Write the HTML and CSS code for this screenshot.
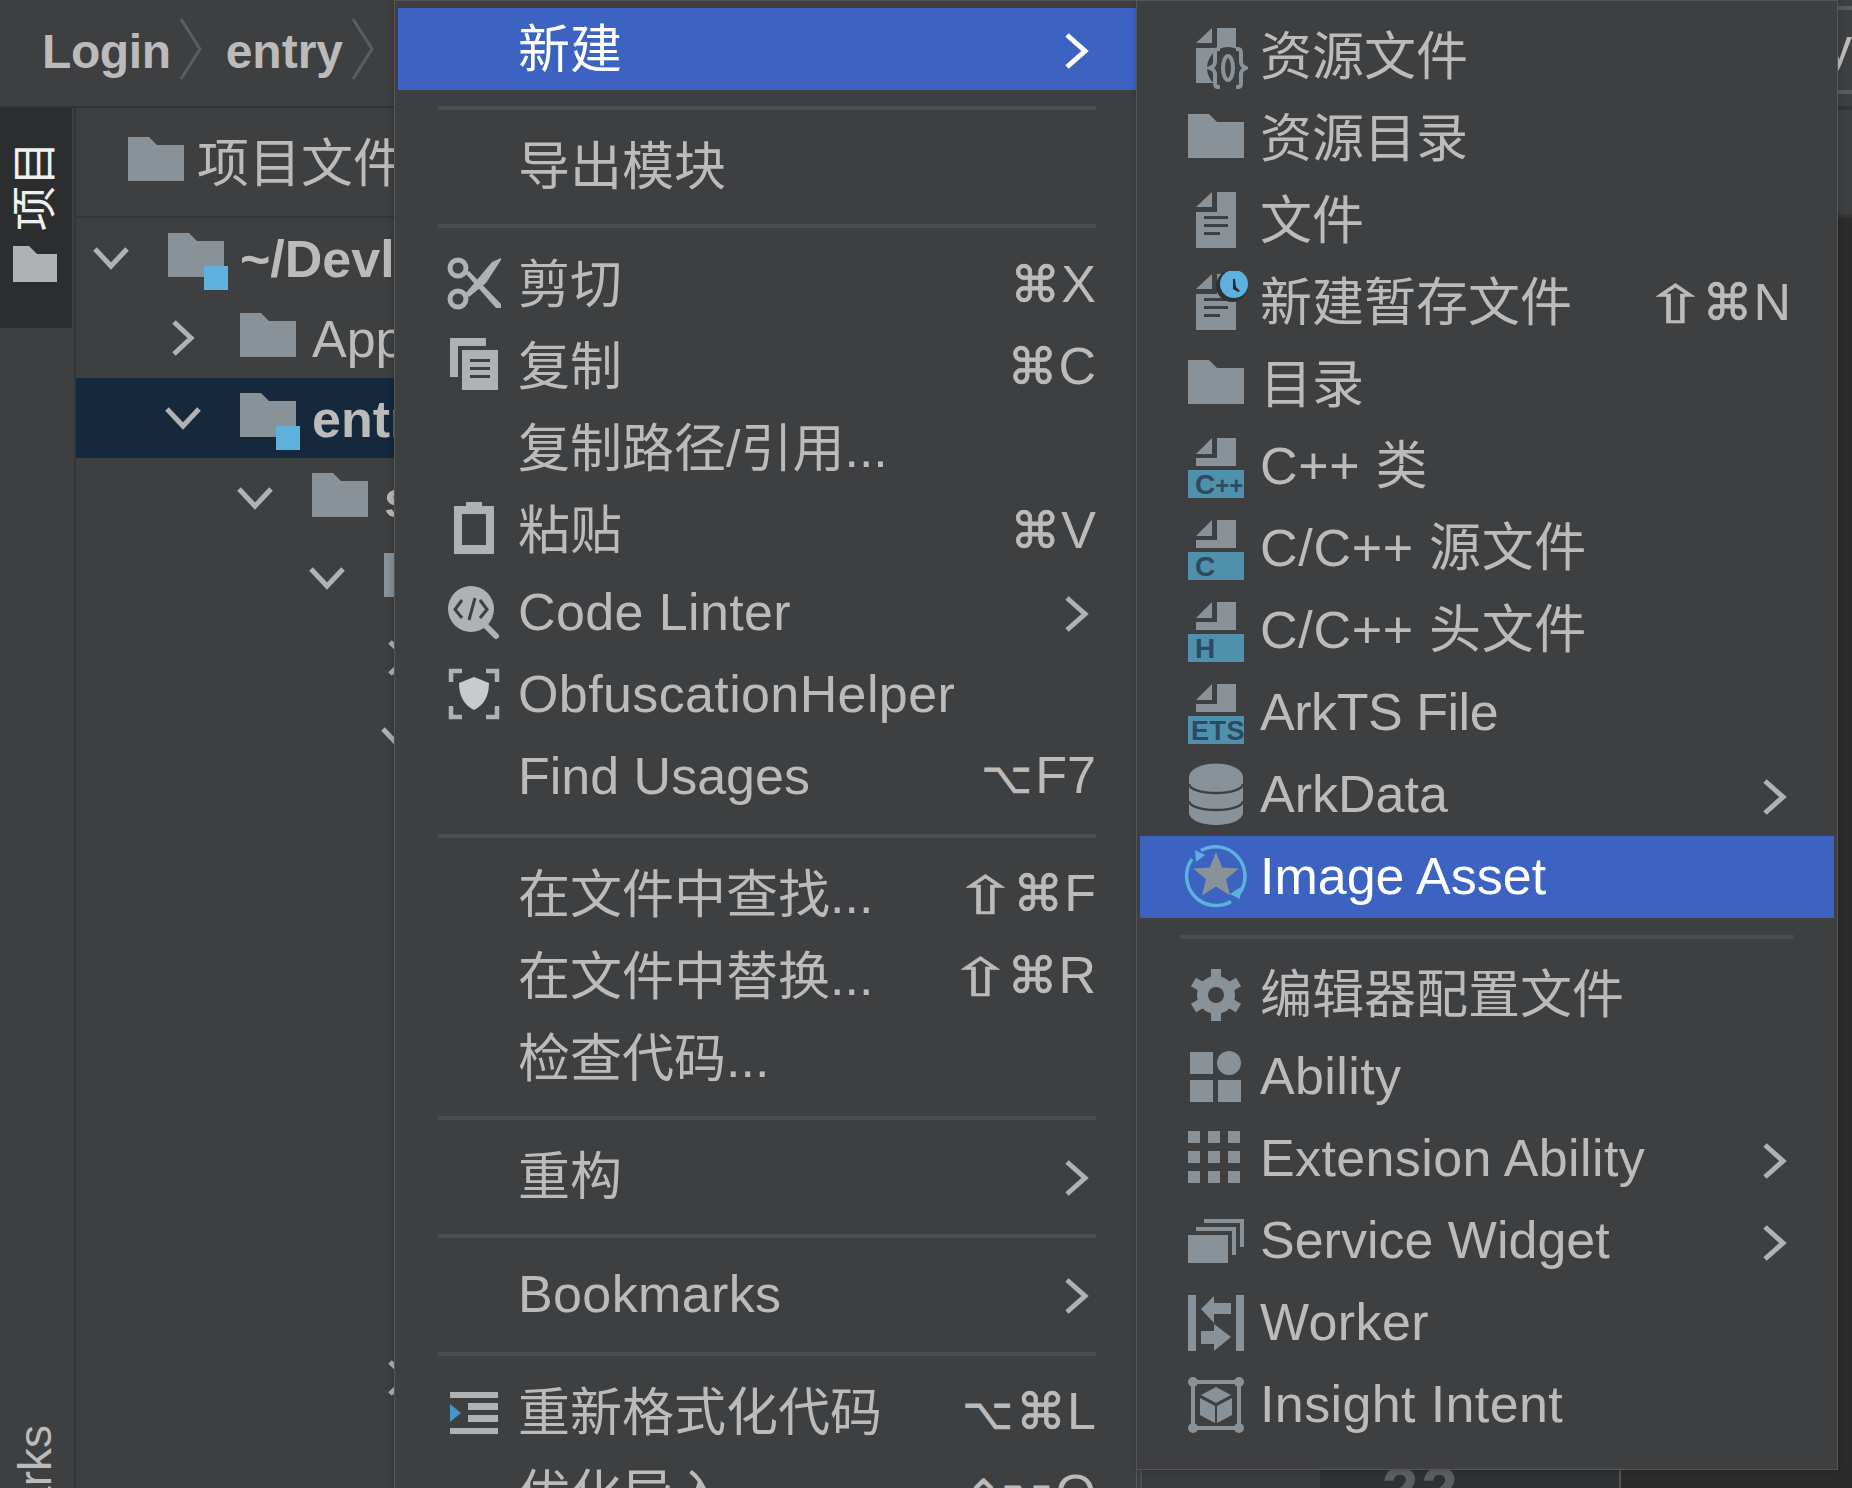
FILE: index.html
```html
<!DOCTYPE html>
<html lang="zh">
<head>
<meta charset="utf-8">
<title>Context menu</title>
<link rel="stylesheet" href="styles.css">
</head>
<body>
<svg class="defs" aria-hidden="true">
  <symbol id="folder" viewBox="0 0 64 64"><path class="f" d="M4 7H25L33 15H60V51H4Z"/></symbol>
  <symbol id="module" viewBox="0 0 64 64"><path class="f" d="M4 7H25L33 15H60V51H4Z"/><rect class="b" x="40" y="40" width="24" height="24"/></symbol>
  <symbol id="down" viewBox="0 0 36 36"><path class="cv" d="M2 9L18 26L34 9"/></symbol>
  <symbol id="right" viewBox="0 0 36 36"><path class="cv" d="M9 2L26 18L9 34"/></symbol>
  <symbol id="arrow" viewBox="0 0 30 40"><path class="cv" d="M4 4L22 20L4 36"/></symbol>
  <symbol id="arrow-w" viewBox="0 0 30 40"><path class="cv-w" d="M4 4L22 20L4 36"/></symbol>
  <symbol id="crumb" viewBox="0 0 24 64"><path class="cr" d="M2 2L21 32L2 62"/></symbol>

  <symbol id="scissors" viewBox="0 0 64 64">
    <circle class="s-g5" cx="16" cy="16" r="8"/><circle class="s-g5" cx="16" cy="47" r="8"/>
    <path class="g" d="M23 21L27 19L59 52V56H54Z"/><path class="g" d="M23 42L27 45L44 31L59 8V6L50 10Z"/>
  </symbol>
  <symbol id="copy" viewBox="0 0 64 64">
    <path class="g" d="M8 4H44V12H16V43H8Z"/>
    <path class="g" d="M20 16H56V56H20Z"/>
    <path class="d" d="M28 25H48V28H28ZM28 33H48V36H28ZM28 41H48V44H28Z"/>
  </symbol>
  <symbol id="paste" viewBox="0 0 64 64">
    <path class="g" fill-rule="evenodd" d="M12 8H24V4H40V8H52V56H12ZM20 16V47H44V16Z"/>
  </symbol>
  <symbol id="linter" viewBox="0 0 64 64">
    <circle class="g" cx="29" cy="29" r="23"/>
    <path class="s-g6" d="M43 45L54 56"/>
    <path class="s-d" d="M20 20L13 29.5L20 38M38 20L45 29.5L38 38M33 18L27 40"/>
  </symbol>
  <symbol id="shield" viewBox="0 0 64 64">
    <path class="s-g4" d="M20 9H9V20M44 9H55V20M9 44V55H20M55 44V55H44"/>
    <path class="l" d="M32 15L47 21C47 34 42 43 32 48C22 43 17 34 17 21Z"/>
  </symbol>
  <symbol id="format" viewBox="0 0 64 64">
    <path class="g" d="M8 12H56V18H8ZM26 23H56V30H26ZM26 35H56V42H26ZM8 48H56V54H8Z"/>
    <path class="bl" d="M8 24L19 33L8 42Z"/>
  </symbol>

  <symbol id="res" viewBox="0 0 64 64">
    <path class="f" d="M12 18L28 3V18ZM33 3H52V58H12V23H33Z"/>
    <circle class="d" cx="44" cy="43" r="21"/>
    <path class="s-f" d="M36 24H34Q31 24 31 28V37Q31 41 26 43Q31 45 31 49V58Q31 62 34 62H36M52 24H54Q57 24 57 28V37Q57 41 62 43Q57 45 57 49V58Q57 62 54 62H52"/>
    <ellipse class="s-f" cx="44" cy="43" rx="5" ry="12"/>
  </symbol>
  <symbol id="doc" viewBox="0 0 64 64">
    <path class="f" d="M12 18L28 3V18ZM33 3H52V59H12V23H33Z"/>
    <path class="d" d="M20 27H44V30H20ZM20 35H44V38H20ZM20 43H36V46H20Z"/>
  </symbol>
  <symbol id="scratch" viewBox="0 0 64 64">
    <path class="f" d="M12 18L28 3V18ZM33 3H52V59H12V23H33Z"/>
    <path class="d" d="M20 27H44V30H20ZM20 35H44V38H20ZM20 43H36V46H20Z"/>
    <circle class="sh" cx="48" cy="15" r="16"/>
    <circle class="b" cx="50" cy="13" r="14"/>
    <path class="ink" d="M49 8H51L52 16L56 20L54 21L49 18Z"/>
  </symbol>
  <symbol id="sheet" viewBox="0 0 64 64">
    <path class="f" d="M12 19L28 3V19ZM33 3H52V31H12V23H33Z"/>
    <rect class="t" x="4" y="35" width="56" height="28"/>
  </symbol>
  <symbol id="db" viewBox="0 0 64 64">
    <path class="f" d="M5 14A27 13.5 0 0 1 59 14V50A27 12 0 0 1 5 50Z"/>
    <path class="s-db" d="M5 21A27 9 0 0 0 59 21M5 38A27 9 0 0 0 59 38"/>
  </symbol>
  <symbol id="asset" viewBox="0 0 64 64">
    <path class="s-b" d="M17 5.5A29.5 29.5 0 0 1 55 49M47 56.5A29.5 29.5 0 0 1 8 14"/>
    <path class="b" d="M11 5L21 10L12 17ZM46 49L57 42L56 54Z"/>
    <path class="f" d="M32 7L38.2 22.5L54.8 23.6L42 34.2L46.1 50.4L32 41.5L17.9 50.4L22 34.2L9.2 23.6L25.8 22.5Z"/>
  </symbol>
  <symbol id="gear" viewBox="0 0 64 64">
    <circle class="f" cx="32" cy="32" r="19"/>
    <path class="f" d="M27 6H37V18H27ZM27 46H37V58H27Z"/>
    <path class="f rot60" d="M27 6H37V18H27ZM27 46H37V58H27Z"/>
    <path class="f rot120" d="M27 6H37V18H27ZM27 46H37V58H27Z"/>
    <circle class="d" cx="32" cy="32" r="8"/>
  </symbol>
  <symbol id="ability" viewBox="0 0 64 64">
    <rect class="f" x="6" y="7" width="23" height="22"/>
    <circle class="f" cx="45" cy="18" r="12"/>
    <rect class="f" x="6" y="35" width="23" height="22"/>
    <rect class="f" x="34" y="35" width="23" height="22"/>
  </symbol>
  <symbol id="ext" viewBox="0 0 64 64">
    <path class="f" d="M4 4h12v12H4zM24 4h12v12H24zM44 4h12v12H44zM4 24h12v12H4zM24 24h12v12H24zM44 24h12v12H44zM4 44h12v12H4zM24 44h12v12H24zM44 44h12v12H44z"/>
  </symbol>
  <symbol id="widget" viewBox="0 0 64 64">
    <rect class="f" x="4" y="26" width="40" height="28"/>
    <path class="f" d="M12 18H52V46H48V22H12ZM20 10H60V38H56V14H20Z"/>
  </symbol>
  <symbol id="worker" viewBox="0 0 64 64">
    <path class="f" d="M4 4H12V60H4ZM52 4H60V60H52Z"/>
    <path class="f" d="M17 18L30 5V12H47V23H30V32ZM17 40H30V33L47 46L30 60V53H17Z"/>
  </symbol>
  <symbol id="insight" viewBox="0 0 64 64">
    <rect class="s-f" x="9" y="9" width="46" height="46"/>
    <circle class="f" cx="9" cy="9" r="5"/><circle class="f" cx="55" cy="9" r="5"/>
    <circle class="f" cx="9" cy="55" r="5"/><circle class="f" cx="55" cy="55" r="5"/>
    <path class="f" d="M32 14L47 22L32 30L17 22ZM16 25L31 33V50L16 42ZM48 25L33 33V50L48 42Z"/>
  </symbol>
</svg>

<div class="app">
  <header class="topbar">
    <span class="crumb">Login</span>
    <svg class="crumb-sep"><use href="#crumb"/></svg>
    <span class="crumb">entry</span>
    <svg class="crumb-sep"><use href="#crumb"/></svg>
    <div class="tab-stub"><span>y</span></div>
  </header>

  <div class="main">
    <aside class="strip">
      <div class="strip-tab">
        <span class="vtext">项目</span>
        <svg class="strip-folder" viewBox="0 0 44 36"><path class="g" d="M0 0H16L24 8H44V36H0Z"/></svg>
      </div>
      <span class="vtext vtext-bm">Bookmarks</span>
    </aside>

    <section class="tree">
      <div class="tree-head">
        <svg class="ic"><use href="#folder"/></svg>
        <span class="head-label">项目文件</span>
      </div>
      <div class="row lv0"><svg class="chev"><use href="#down"/></svg><svg class="ic"><use href="#module"/></svg><b>~/Devl</b></div>
      <div class="row lv1"><svg class="chev"><use href="#right"/></svg><svg class="ic"><use href="#folder"/></svg><span>AppScope</span></div>
      <div class="row lv1 sel"><svg class="chev"><use href="#down"/></svg><svg class="ic"><use href="#module"/></svg><b>entry</b></div>
      <div class="row lv2"><svg class="chev"><use href="#down"/></svg><svg class="ic"><use href="#folder"/></svg><b>src</b></div>
      <div class="row lv3"><svg class="chev"><use href="#down"/></svg><svg class="ic"><use href="#folder"/></svg><span>main</span></div>
      <div class="row lv4"><svg class="chev"><use href="#right"/></svg></div>
      <div class="row lv4"><svg class="chev"><use href="#down"/></svg></div>
      <div class="row"></div><div class="row"></div><div class="row"></div><div class="row"></div><div class="row"></div><div class="row"></div><div class="row"></div>
      <div class="row lv4"><svg class="chev"><use href="#right"/></svg></div>
    </section>

    <section class="editor">
      <div class="ed-tabs"></div>
      <div class="ed-body">
        <div class="ed-pad"></div>
        <div class="gut-a"></div>
        <div class="gut-b"><span class="lineno">22</span></div>
        <div class="code"></div>
      </div>
    </section>
  </div>

  <nav class="menu menu-a">
    <div class="item active"><span class="ic"></span><span>新建</span><svg class="more"><use href="#arrow-w"/></svg></div>
    <div class="sep sep-first"></div>
    <div class="item"><span class="ic"></span><span>导出模块</span></div>
    <div class="sep"></div>
    <div class="item"><svg class="ic"><use href="#scissors"/></svg><span>剪切</span><span class="sc"><span class="sym cmd">⌘</span>X</span></div>
    <div class="item"><svg class="ic"><use href="#copy"/></svg><span>复制</span><span class="sc"><span class="sym cmd">⌘</span>C</span></div>
    <div class="item"><span class="ic"></span><span>复制路径/引用...</span></div>
    <div class="item"><svg class="ic"><use href="#paste"/></svg><span>粘贴</span><span class="sc"><span class="sym cmd">⌘</span>V</span></div>
    <div class="item"><svg class="ic"><use href="#linter"/></svg><span class="lat wide">Code Linter</span><svg class="more"><use href="#arrow"/></svg></div>
    <div class="item"><svg class="ic"><use href="#shield"/></svg><span class="lat wide">ObfuscationHelper</span></div>
    <div class="item"><span class="ic"></span><span class="lat">Find Usages</span><span class="sc"><span class="sym">⌥</span>F7</span></div>
    <div class="sep"></div>
    <div class="item"><span class="ic"></span><span>在文件中查找...</span><span class="sc"><span class="sym shift">⇧</span><span class="sym cmd">⌘</span>F</span></div>
    <div class="item"><span class="ic"></span><span>在文件中替换...</span><span class="sc"><span class="sym shift">⇧</span><span class="sym cmd">⌘</span>R</span></div>
    <div class="item"><span class="ic"></span><span>检查代码...</span></div>
    <div class="sep"></div>
    <div class="item"><span class="ic"></span><span>重构</span><svg class="more"><use href="#arrow"/></svg></div>
    <div class="sep"></div>
    <div class="item"><span class="ic"></span><span class="lat wide">Bookmarks</span><svg class="more"><use href="#arrow"/></svg></div>
    <div class="sep"></div>
    <div class="item"><svg class="ic"><use href="#format"/></svg><span>重新格式化代码</span><span class="sc"><span class="sym">⌥</span><span class="sym cmd">⌘</span>L</span></div>
    <div class="item"><span class="ic"></span><span>优化导入</span><span class="sc"><span class="sym">⌃⌥</span>O</span></div>
  </nav>

  <nav class="menu menu-b">
    <div class="item"><svg class="ic"><use href="#res"/></svg><span>资源文件</span></div>
    <div class="item"><svg class="ic"><use href="#folder"/></svg><span>资源目录</span></div>
    <div class="item"><svg class="ic"><use href="#doc"/></svg><span>文件</span></div>
    <div class="item"><svg class="ic"><use href="#scratch"/></svg><span>新建暂存文件</span><span class="sc"><span class="sym shift">⇧</span><span class="sym cmd">⌘</span>N</span></div>
    <div class="item"><svg class="ic"><use href="#folder"/></svg><span>目录</span></div>
    <div class="item"><svg class="ic" viewBox="0 0 64 64"><use href="#sheet"/><text class="badge" x="11" y="59">C<tspan class="badge-s">++</tspan></text></svg><span class="lat mix">C++ 类</span></div>
    <div class="item"><svg class="ic" viewBox="0 0 64 64"><use href="#sheet"/><text class="badge" x="11" y="59">C</text></svg><span class="lat mix">C/C++ 源文件</span></div>
    <div class="item"><svg class="ic" viewBox="0 0 64 64"><use href="#sheet"/><text class="badge" x="11" y="59">H</text></svg><span class="lat mix">C/C++ 头文件</span></div>
    <div class="item"><svg class="ic" viewBox="0 0 64 64"><use href="#sheet"/><text class="badge badge-e" x="7" y="59">ETS</text></svg><span class="lat tight">ArkTS File</span></div>
    <div class="item"><svg class="ic"><use href="#db"/></svg><span class="lat">ArkData</span><svg class="more"><use href="#arrow"/></svg></div>
    <div class="item active"><svg class="ic"><use href="#asset"/></svg><span class="lat">Image Asset</span></div>
    <div class="sep"></div>
    <div class="item"><svg class="ic"><use href="#gear"/></svg><span>编辑器配置文件</span></div>
    <div class="item"><svg class="ic"><use href="#ability"/></svg><span class="lat wide">Ability</span></div>
    <div class="item"><svg class="ic"><use href="#ext"/></svg><span class="lat wide">Extension Ability</span><svg class="more"><use href="#arrow"/></svg></div>
    <div class="item"><svg class="ic"><use href="#widget"/></svg><span class="lat">Service Widget</span><svg class="more"><use href="#arrow"/></svg></div>
    <div class="item"><svg class="ic"><use href="#worker"/></svg><span class="lat wide">Worker</span></div>
    <div class="item"><svg class="ic"><use href="#insight"/></svg><span class="lat wide">Insight Intent</span></div>
  </nav>
</div>
</body>
</html>
```
FILE: styles.css
```css
* { box-sizing: border-box; }
html, body { margin: 0; padding: 0; background: #3e3f41; }
body { font-family: "Liberation Sans", "Noto Sans CJK SC", "DejaVu Sans", sans-serif; font-size: 52px; color: #bbbbbb; }
.defs { position: absolute; width: 0; height: 0; }

/* icon paint */
.f { fill: #8a9299; }
.g { fill: #afb1b3; }
.l { fill: #c9cacc; }
.d { fill: #3e3f41; }
.b { fill: #5eb1dc; }
.t { fill: #4f90ad; }
.bl { fill: #4a93c8; }
.ink { fill: #2b2d30; }
.sh { fill: #2f3133; }
.s-g5 { fill: none; stroke: #afb1b3; stroke-width: 5; }
.s-g4 { fill: none; stroke: #afb1b3; stroke-width: 4.5; }
.s-g6 { fill: none; stroke: #afb1b3; stroke-width: 6; stroke-linecap: round; }
.s-d { fill: none; stroke: #3e3f41; stroke-width: 3; }
.s-f { fill: none; stroke: #8a9299; stroke-width: 4; }
.s-b { fill: none; stroke: #5eb1dc; stroke-width: 3.5; }
.s-db { fill: none; stroke: #3e3f41; stroke-width: 2.5; }
.rot60 { transform: rotate(60deg); transform-origin: 32px 32px; }
.rot120 { transform: rotate(120deg); transform-origin: 32px 32px; }
.cv { fill: none; stroke: #afb1b3; stroke-width: 5; }
.cv-w { fill: none; stroke: #ffffff; stroke-width: 5; }
.cr { fill: none; stroke: #5a5e61; stroke-width: 3; }
.badge { fill: #2d4a5f; font-family: "Liberation Sans", sans-serif; font-weight: 700; font-size: 28px; }
.badge-s { font-size: 24px; }
.badge-e { font-size: 27px; letter-spacing: 0.5px; }

/* page frame */
.app { position: relative; width: 1852px; height: 1488px; overflow: hidden; display: flex; flex-direction: column; }

.topbar { height: 108px; flex: none; display: flex; align-items: center; padding-left: 42px; border-bottom: 2px solid #323335; white-space: nowrap; }
.crumb { font-size: 48px; font-weight: 700; line-height: 60px; margin-top: -3px; }
.crumb:first-child { letter-spacing: -0.4px; }
.crumb-sep { width: 24px; height: 64px; margin: -8px 23px 0 8px; flex: none; }
.tab-stub { margin-left: auto; width: 14px; height: 88px; margin-top: -6px; border-top: 4px solid #5a5b5d; border-bottom: 4px solid #5a5b5d; overflow: hidden; line-height: 80px; text-indent: -12px; }
.tab-stub span { display: block; margin-top: -4px; }

.main { flex: 1; display: flex; min-height: 0; }

.strip { width: 76px; flex: none; border-right: 2px solid #333537; overflow: hidden; }
.strip-tab { width: 72px; height: 220px; background: #2c2d2f; display: flex; flex-direction: column; align-items: center; padding-top: 33px; gap: 15px; }
.vtext { writing-mode: vertical-rl; text-orientation: sideways; transform: rotate(180deg); font-size: 45px; line-height: 46px; color: #f0f0f0; white-space: nowrap; flex: none; }
.strip-folder { width: 44px; height: 36px; flex: none; margin-left: -3px; }
.vtext-bm { display: block; width: 46px; margin: 1097px 0 0 12px; font-size: 46px; color: #bbbbbb; }

.tree { width: 318px; flex: none; overflow: hidden; white-space: nowrap; }
.tree-head { height: 110px; border-bottom: 2px solid #333537; padding-left: 48px; display: flex; align-items: center; gap: 9px; }
.head-label { margin-bottom: 6px; }
.row { height: 80px; display: flex; align-items: center; }
.row b, .row span { margin-top: 2px; }
.lv0 { padding-left: 17px; }
.lv1 { padding-left: 89px; }
.lv2 { padding-left: 161px; }
.lv3 { padding-left: 233px; }
.lv4 { padding-left: 305px; }
.sel { background: #15283c; }
.chev { width: 36px; height: 36px; flex: none; margin-right: 35px; }
.row .ic { margin-right: 12px; }

.editor { flex: 1; display: flex; flex-direction: column; min-width: 0; }
.ed-tabs { height: 110px; flex: none; border-top: 2px solid #333537; border-bottom: 4px solid #333537; }
.ed-body { flex: 1; display: flex; min-height: 0; }
.ed-pad { width: 746px; flex: none; }
.gut-a { width: 180px; flex: none; background: #3a3b3d; border-left: 2px solid #4c4d4f; }
.gut-b { width: 301px; flex: none; background: #2f3032; border-right: 2px solid #525355; padding: 1247px 0 0 60px; }
.lineno { display: block; font-family: "Liberation Mono", monospace; font-weight: 700; font-size: 66px; line-height: 60px; color: #5d5e60; }
.code { flex: 1; background: #2b2b2b; }

/* popups */
.ic { width: 64px; height: 64px; flex: none; display: block; overflow: visible; }
.menu { position: absolute; top: 0; background: #3e3f41; border: 1px solid #545658; white-space: nowrap; }
.menu-a { left: 394px; width: 743px; height: 1500px; padding: 7px 0 0 3px; box-shadow: -3px 0 6px rgba(0, 0, 0, 0.12); }
.menu-b { left: 1136px; width: 702px; height: 1470px; padding: 15px 3px 0 3px; box-shadow: 0 0 6px rgba(0, 0, 0, 0.2); }
.item { height: 82px; display: flex; align-items: center; padding-left: 44px; gap: 12px; line-height: 82px; }
.menu-a .item { padding-right: 40px; }
.menu-b .item { padding-right: 43px; }
.menu-a .item > span:not(.lat):not(.sc) { margin-top: 2px; }
.menu-b .lat { margin-bottom: 2px; }
.wide { letter-spacing: 0.38px; }
.mix { letter-spacing: 0.7px; }
.tight { letter-spacing: -0.45px; }
.active { background: #3c62c2; color: #ffffff; }
.sc { margin-left: auto; }
.sym { font-family: "DejaVu Sans", sans-serif; font-size: 44px; margin-right: 3px; -webkit-text-stroke: 0.7px #bbbbbb; }
.cmd { font-size: 50px; margin-right: 1px; }
.shift { display: inline-block; transform: scale(1.75, 1.2); margin: 0 9px 0 4px; -webkit-text-stroke: 0.4px #bbbbbb; }
.more { margin-left: auto; width: 30px; height: 40px; flex: none; margin-top: 3px; }
.menu-a .more { margin-right: 3px; }
.sep { height: 4px; background: #4b4c4e; margin: 17px 40px 15px 40px; }
.sep-first { margin-top: 16px; }
```
